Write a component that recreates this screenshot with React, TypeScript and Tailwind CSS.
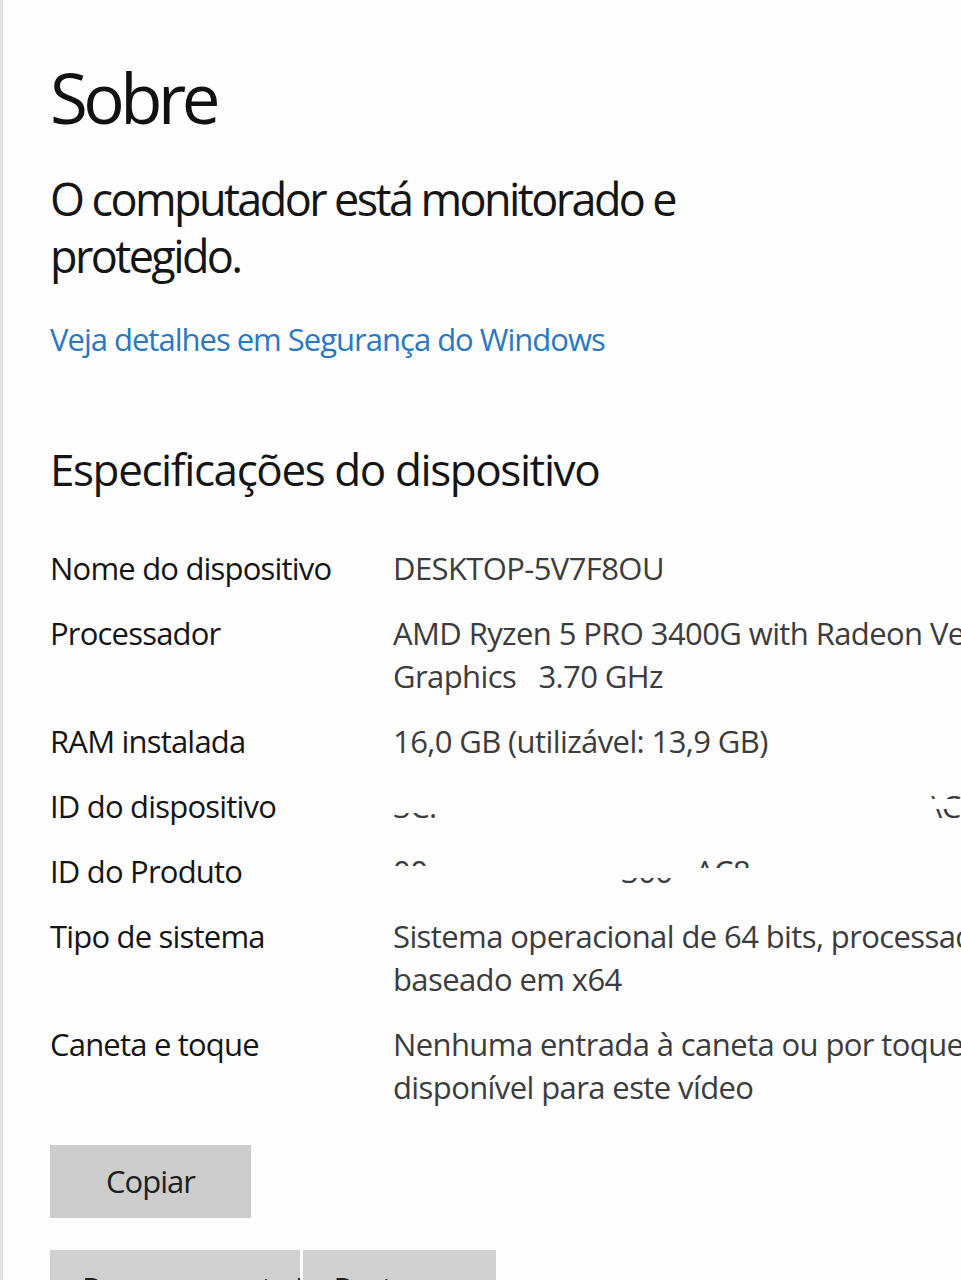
import React from "react"

const font = { fontFamily: '"Open Sans", "Noto Sans", sans-serif' }

function Row({ label, children }: { label: string; children: React.ReactNode }) {
  return (
    <div className="flex">
      <div className="w-[343px] shrink-0 text-[#151515] tracking-[-0.8px]">{label}</div>
      <div className="flex-1 whitespace-nowrap text-[#3c3c3c] tracking-[-0.6px]">{children}</div>
    </div>
  )
}

export default function App() {
  return (
    <div
      className="h-[1280px] overflow-hidden bg-[#fdfdfd] border-l-[3px] border-[#e2e2e2] pl-[47px]"
      style={font}
    >
      {/* Title */}
      <h1 className="pt-[49px] text-[69px] leading-[96px] text-[#111] tracking-[-4.5px]">Sobre</h1>

      {/* Protection status */}
      <p className="mt-[25px] w-[640px] text-[45px] leading-[57px] text-[#151515] tracking-[-2.6px]">
        O computador está monitorado e protegido.
      </p>
      <a className="mt-[35px] block text-[31px] leading-[40px] text-[#2a78c2] tracking-[-1px]">
        Veja detalhes em Segurança do Windows
      </a>

      {/* Device specs */}
      <h2 className="mt-[82px] text-[44px] leading-[56px] text-[#151515] tracking-[-1.4px]">
        Especificações do dispositivo
      </h2>

      <div className="mt-[50px] flex flex-col gap-[22px] text-[31px] leading-[43px]">
        <Row label="Nome do dispositivo">DESKTOP-5V7F8OU</Row>
        <Row label="Processador">
          AMD Ryzen 5 PRO 3400G with Radeon Vega
          <br />
          Graphics&nbsp;&nbsp;&nbsp;3.70 GHz
        </Row>
        <Row label="RAM instalada">16,0 GB (utilizável: 13,9 GB)</Row>
        <Row label="ID do dispositivo">
          {/* redacted: only slivers of glyphs remain */}
          <div className="relative h-[43px]">
            <span className="absolute left-0 top-0 h-[43px] w-[42px] overflow-hidden">
              <span className="block">3C.</span>
              <span className="absolute inset-x-0 top-0 h-[28px] bg-[#fdfdfd]" />
            </span>
            <span className="absolute left-[538px] top-0 h-[43px] w-[30px] overflow-hidden">
              <span className="block">\C</span>
              <span className="absolute inset-x-0 top-[14px] h-[10px] bg-[#fdfdfd]" />
            </span>
          </div>
        </Row>
        <Row label="ID do Produto">
          <div className="relative h-[43px]">
            <span className="absolute left-0 top-0 h-[43px] w-[50px] overflow-hidden">
              <span className="block">00</span>
              <span className="absolute inset-x-0 top-[16px] h-[30px] bg-[#fdfdfd]" />
            </span>
            <span className="absolute left-[228px] top-0 h-[43px] w-[60px] overflow-hidden">
              <span className="block">300</span>
              <span className="absolute inset-x-0 top-0 h-[28px] bg-[#fdfdfd]" />
            </span>
            <span className="absolute left-[302px] top-0 h-[43px] w-[70px] overflow-hidden">
              <span className="block">AC8</span>
              <span className="absolute inset-x-0 top-[18px] h-[30px] bg-[#fdfdfd]" />
            </span>
          </div>
        </Row>
        <Row label="Tipo de sistema">
          Sistema operacional de 64 bits, processador
          <br />
          baseado em x64
        </Row>
        <Row label="Caneta e toque">
          Nenhuma entrada à caneta ou por toque
          <br />
          disponível para este vídeo
        </Row>
      </div>

      {/* Actions */}
      <button className="mt-[36px] block h-[73px] w-[201px] bg-[#cdcdcd] text-[31px] text-[#1e1e1e] tracking-[-1px]">
        Copiar
      </button>
      <div className="mt-[32px] flex gap-[3px]">
        <button className="flex h-[80px] w-[250px] items-start overflow-hidden whitespace-nowrap bg-[#d0d0d0] pl-[32px] pt-[17px] text-[31px] leading-[43px] text-[#1e1e1e] tracking-[-1px]">
          Renomear este PC
        </button>
        <button className="flex h-[80px] w-[193px] items-start justify-center overflow-hidden whitespace-nowrap bg-[#d0d0d0] pt-[17px] text-[31px] leading-[43px] text-[#1e1e1e] tracking-[-1px]">
          Restaurar
        </button>
      </div>
    </div>
  )
}
